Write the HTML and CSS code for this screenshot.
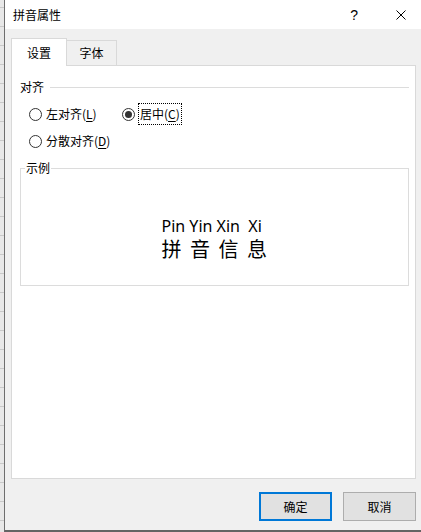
FILE: index.html
```html
<!DOCTYPE html>
<html lang="zh-CN">
<head>
<meta charset="utf-8">
<title>拼音属性</title>
<link rel="stylesheet" href="styles.css">
</head>
<body>
<div class="screen">
  <div class="sheet"></div>
  <div class="dialog">
    <div class="titlebar">
      <span class="title">拼音属性</span>
      <span class="help">?</span>
      <span class="close"><svg width="10" height="10" viewBox="0 0 10 10"><path d="M0.5 0.5L9.5 9.5M9.5 0.5L0.5 9.5" stroke="#000" stroke-width="1" fill="none"/></svg></span>
    </div>
    <div class="body">
      <div class="tabs">
        <div class="tab active">设置</div>
        <div class="tab">字体</div>
      </div>
      <div class="panel">
        <div class="group-head">对齐</div>
        <div class="radios">
          <div class="radio"><span class="dot"></span><span class="text">左对齐(<u>L</u>)</span></div>
          <div class="radio checked"><span class="dot"></span><span class="text focus">居中(<u>C</u>)</span></div>
          <div class="radio"><span class="dot"></span><span class="text">分散对齐(<u>D</u>)</span></div>
        </div>
        <fieldset class="sample">
          <legend>示例</legend>
          <div class="preview">
            <div class="pinyin">Pin Yin Xin&nbsp; Xi</div>
            <div class="hanzi">拼 音 信 息</div>
          </div>
        </fieldset>
      </div>
      <div class="buttons">
        <div class="btn default">确定</div>
        <div class="btn">取消</div>
      </div>
    </div>
  </div>
</div>
</body>
</html>
```
FILE: styles.css
```css
* { box-sizing: border-box; }
html, body {
  margin: 0;
  padding: 0;
  width: 421px;
  height: 532px;
  overflow: hidden;
  background: #e6e6e6;
  font-family: "Noto Sans CJK SC", "Noto Sans", sans-serif;
  font-size: 12px;
  color: #000;
}
.screen {
  display: flex;
  width: 421px;
  height: 532px;
}
.sheet {
  width: 4px;
  flex: none;
  background: repeating-linear-gradient(to bottom, #e8e8e8 0 18px, #c9c9c9 18px 19px);
  background-position: 0 -11px;
}
.dialog {
  flex: 1;
  display: flex;
  flex-direction: column;
  border-left: 1px solid #6e6e6e;
  border-bottom: 2px solid #646464;
  background: #f0f0f0;
}
.titlebar {
  height: 29px;
  flex: none;
  display: flex;
  align-items: center;
  background: #fff;
  padding-left: 8px;
  line-height: 16px;
}
.title { flex: 1; font-size: 12px; }
.help {
  font-family: "Liberation Sans", sans-serif;
  font-size: 14px;
  margin-right: 38px;
}
.close {
  display: flex;
  width: 10px;
  height: 10px;
  margin-right: 15px;
}
.body {
  flex: 1;
  display: flex;
  flex-direction: column;
  padding: 9px 5px 0 6px;
}
.tabs {
  display: flex;
  align-items: flex-end;
  height: 27px;
}
.tab {
  border: 1px solid #d9d9d9;
  border-bottom: none;
  display: flex;
  align-items: center;
  justify-content: center;
  line-height: 16px;
}
.tab.active {
  position: relative;
  z-index: 1;
  width: 56px;
  height: 28px;
  margin-bottom: -1px;
  background: #fff;
}
.tab:not(.active) {
  width: 51px;
  height: 25px;
  margin-left: -1px;
  background: #f0f0f0;
}
.panel {
  height: 414px;
  flex: none;
  background: #fff;
  border: 1px solid #d9d9d9;
  padding: 12px 6px 0 8px;
}
.group-head {
  display: flex;
  align-items: center;
  gap: 6px;
  height: 18px;
  line-height: 18px;
}
.group-head::after {
  content: "";
  flex: 1;
  height: 1px;
  background: #dcdcdc;
}
.radios {
  display: grid;
  grid-template-columns: 93px auto;
  grid-auto-rows: 20px;
  row-gap: 7px;
  margin-top: 8px;
  padding-left: 9px;
}
.radio {
  display: flex;
  align-items: center;
  gap: 4px;
  line-height: 16px;
}
.dot {
  width: 13px;
  height: 13px;
  flex: none;
  border: 1px solid #333;
  border-radius: 50%;
  background: #fff;
  display: flex;
  align-items: center;
  justify-content: center;
}
.radio.checked .dot::after {
  content: "";
  width: 7px;
  height: 7px;
  border-radius: 50%;
  background: #333;
}
.text u { text-underline-offset: 2px; }
.focus {
  border: 1px dotted #000;
  padding: 2px 1px;
  margin-left: -1px;
}
.sample {
  margin: 10px 0 0 0;
  padding: 0 0 24px 0;
  border: 1px solid #dcdcdc;
  min-width: 0;
}
.sample legend {
  margin-left: 4px;
  padding: 0 1px;
  line-height: 14px;
}
.preview {
  padding-top: 42px;
  display: flex;
  flex-direction: column;
  align-items: center;
}
.preview > div { width: 106px; text-align: left; }
.pinyin {
  font-family: "Noto Sans", "Open Sans", sans-serif;
  font-size: 16px;
  line-height: 19px;
  white-space: pre;
}
.hanzi {
  font-size: 20px;
  line-height: 24px;
  word-spacing: 4px;
  white-space: pre;
  margin-top: 1px;
}
.buttons {
  display: flex;
  justify-content: flex-end;
  gap: 11px;
  margin-top: 13px;
}
.btn {
  width: 73px;
  height: 29px;
  display: flex;
  align-items: center;
  justify-content: center;
  background: #e1e1e1;
  border: 1px solid #adadad;
  line-height: 16px;
}
.btn.default {
  border: 2px solid #0078d7;
}
```
